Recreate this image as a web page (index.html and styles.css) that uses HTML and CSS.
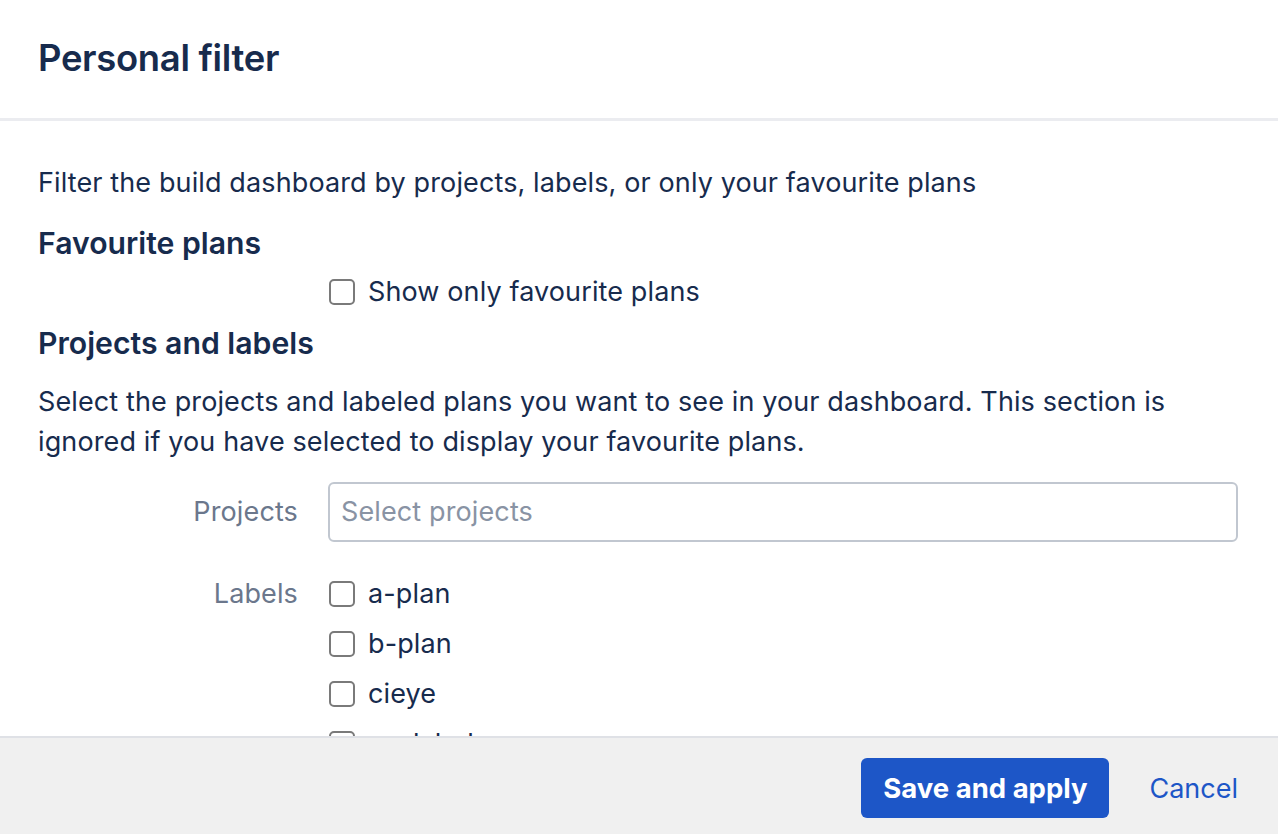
FILE: index.html
```html
<!DOCTYPE html>
<html>
<head>
<meta charset="utf-8">
<link rel="stylesheet" href="styles.css">
</head>
<body>
<div class="dialog">
  <header class="dialog-header">
    <h1 class="title">Personal filter</h1>
  </header>
  <main class="dialog-body">
    <p class="desc">Filter the build dashboard by projects, labels, or only your favourite plans</p>
    <h2 class="section-title">Favourite plans</h2>
    <div class="form-row fav-row">
      <div class="form-label"></div>
      <label class="check"><span class="box"></span><span>Show only favourite plans</span></label>
    </div>
    <h2 class="section-title pl-title">Projects and labels</h2>
    <p class="para">Select the projects and labeled plans you want to see in your dashboard. This section is ignored if you have selected to display your favourite plans.</p>
    <div class="form-row projects-row">
      <div class="form-label">Projects</div>
      <div class="select-input">Select projects</div>
    </div>
    <div class="form-row labels-row">
      <div class="form-label labels-label">Labels</div>
      <div class="check-list">
        <label class="check"><span class="box"></span><span>a-plan</span></label>
        <label class="check"><span class="box"></span><span>b-plan</span></label>
        <label class="check"><span class="box"></span><span>cieye</span></label>
        <label class="check"><span class="box"></span><span>no-label</span></label>
      </div>
    </div>
  </main>
  <footer class="dialog-footer">
    <button class="btn-primary">Save and apply</button>
    <button class="btn-link">Cancel</button>
  </footer>
</div>
</body>
</html>
```
FILE: styles.css
```css
* { box-sizing: border-box; }
html, body { margin: 0; padding: 0; height: 100%; }
body {
  font-family: Inter, "Noto Sans", "Liberation Sans", sans-serif;
  color: #172b4d;
  background: #fff;
  overflow: hidden;
}
.dialog {
  height: 834px;
  display: flex;
  flex-direction: column;
}
.dialog-header {
  height: 121px;
  flex: none;
  border-bottom: 3px solid #ebecf0;
  padding: 0 38px;
  display: flex;
  align-items: center;
  padding-bottom: 3px;
}
.title {
  margin: 0;
  font-size: 36.4px;
  font-weight: 600;
  letter-spacing: -0.3px;
  color: #172b4d;
}
.dialog-body {
  flex: 1;
  overflow: hidden;
  padding: 0 40px 0 38px;
  font-size: 27px;
  letter-spacing: 0.12px;
  line-height: 40px;
}
.desc { margin: 42px 0 0; }
.section-title {
  margin: 20px 0 0;
  font-size: 30.2px;
  font-weight: 600;
  letter-spacing: 0;
  line-height: 40px;
}
.pl-title { margin-top: 6px; }
.para { margin: 19px 0 0; }
.form-row {
  display: flex;
  gap: 30px;
}
.form-label {
  width: 260px;
  flex: none;
  text-align: right;
  color: #6b778c;
}
.fav-row { margin-top: 4px; }
.check {
  display: flex;
  align-items: center;
  gap: 13px;
  height: 50px;
}
.box {
  width: 26px;
  height: 26px;
  border: 2px solid #7a7a7a;
  border-radius: 5px;
  margin-left: 1px;
  flex: none;
  background: #fff;
}
.projects-row {
  margin-top: 20px;
  align-items: center;
}
.select-input {
  flex: 1;
  height: 60px;
  border: 2px solid #c1c7d0;
  border-radius: 6px;
  padding: 0 11px;
  display: flex;
  align-items: center;
  color: #8993a4;
}
.labels-row { margin-top: 27px; }
.labels-label { line-height: 50px; }
.check-list { display: flex; flex-direction: column; }
.dialog-footer {
  flex: none;
  height: 98px;
  border-top: 2px solid #dfe1e6;
  background: #f0f0f0;
  display: flex;
  align-items: center;
  justify-content: flex-end;
  padding: 4px 40px 0 0;
  gap: 40px;
}
.btn-primary {
  font-family: inherit;
  width: 248px;
  height: 60px;
  border: none;
  border-radius: 6px;
  background: #1d56c7;
  color: #fff;
  font-size: 27.5px;
  font-weight: 700;
  padding: 0;
}
.btn-link {
  font-family: inherit;
  border: none;
  background: none;
  padding: 0;
  color: #1d56c7;
  font-size: 27px;
}
```
